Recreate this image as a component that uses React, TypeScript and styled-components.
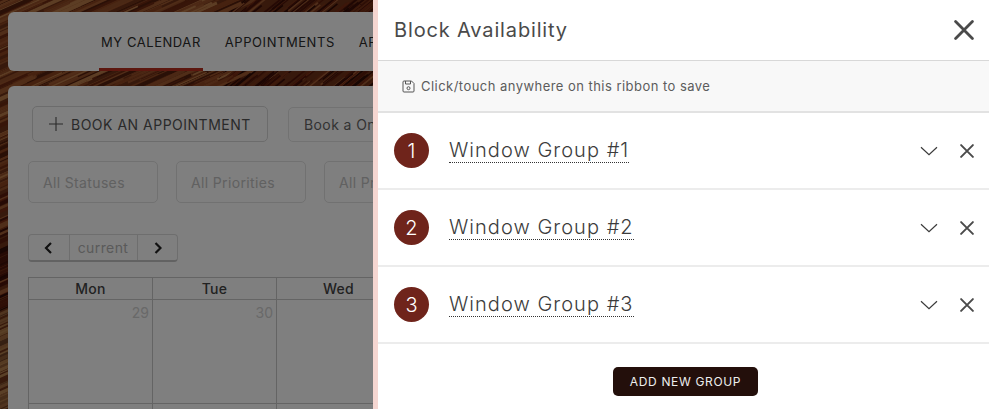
import React from 'react';
import styled, { createGlobalStyle } from 'styled-components';

const FONT = `"Inter", "Liberation Sans", sans-serif`;

const groups = [1, 2, 3];
const filters = ['All Statuses', 'All Priorities', 'All Providers'];
const tabs = ['MY CALENDAR', 'APPOINTMENTS', 'APPROVALS'];
const days = [
  { name: 'Mon', date: '29' },
  { name: 'Tue', date: '30' },
  { name: 'Wed', date: '' },
];

// wood grain, drawn once. colours are before the dark overlay on top of them
const warm = ['#98502a', '#6e2a12', '#a05a30', '#8c4420', '#b87a48', '#54200e', '#94502a'];
const dark = ['#4c140a', '#7a2c14', '#300c06', '#7a3418', '#5c1c0c', '#a05c34', '#3c0e08'];
const light = ['#a87444', '#a87444', '#8c5a34', '#6c4026', '#a0683e', '#b4804e'];

let seed = 7;
const rand = () => {
  seed = (seed * 16807) % 2147483647;
  return seed / 2147483647;
};

const grain = Array.from({ length: 620 }, () => {
  const band = rand();
  const x = rand() * 390;
  // only three slivers of wood are visible, keep the strokes there
  const y = band < 0.32 ? rand() * 16 : band < 0.66 ? 68 + rand() * 22 : rand() * 409;
  const left = band >= 0.66;
  const gx = left ? rand() * 12 : x;
  const palette = left ? (y > 310 ? light : y > 190 ? dark : warm) : gx > 230 ? dark : warm;
  const slope = gx > 230 ? 0.8 : 0.45;
  const len = gx > 230 ? 14 + rand() * 22 : 24 + rand() * 60;
  return {
    x1: gx - len / 2,
    y1: y + (len / 2) * slope,
    x2: gx + len / 2,
    y2: y - (len / 2) * slope,
    w: gx > 230 ? 1 + rand() : 1 + rand() * 3,
    color: palette[Math.floor(rand() * palette.length)],
  };
});

function WoodGrain() {
  return (
    <WoodSvg viewBox='0 0 380 409' aria-hidden>
      <rect width='380' height='409' fill='#6e3218' />
      {grain.map((g, i) => (
        <line key={i} x1={g.x1} y1={g.y1} x2={g.x2} y2={g.y2} stroke={g.color} strokeWidth={g.w} />
      ))}
    </WoodSvg>
  );
}

function CloseIcon({ size, weight }: { size: number; weight: number }) {
  return (
    <svg width={size} height={size} viewBox='0 0 20 20' fill='none'>
      <path d='M1.6 1.6 18.4 18.4M18.4 1.6 1.6 18.4' stroke='#4a4a4a' strokeWidth={weight} strokeLinecap='round' />
    </svg>
  );
}

function ChevronIcon() {
  return (
    <svg width='18' height='10' viewBox='0 0 18 10' fill='none'>
      <path d='M1 1.2 9 8.6 17 1.2' stroke='#3a3a3a' strokeWidth='1.2' />
    </svg>
  );
}

function SaveIcon() {
  return (
    <svg width='13' height='13' viewBox='0 0 13 13' fill='none' stroke='#555' strokeWidth='1'>
      <path d='M2 1h7.5L12 3.5V11a1 1 0 0 1-1 1H2a1 1 0 0 1-1-1V2a1 1 0 0 1 1-1Z' />
      <path d='M3.5 1v3h5V1' />
      <circle cx='6.5' cy='8.2' r='1.5' />
    </svg>
  );
}

export default function App() {
  return (
    <Viewport>
      <GlobalStyle />
      <WoodGrain />
      <Page>
        <NavCard>
          {tabs.map((t, i) => (
            <Tab key={t} $active={i === 0}>{t}</Tab>
          ))}
        </NavCard>
        <MainCard>
          <Actions>
            <BookButton>
              <svg width='14' height='14' viewBox='0 0 14 14' fill='none'>
                <path d='M7 0v14M0 7h14' stroke='#555' strokeWidth='1.1' />
              </svg>
              BOOK AN APPOINTMENT
            </BookButton>
            <OutlineButton>Book a One-Off</OutlineButton>
          </Actions>
          <Filters>
            {filters.map((f) => (
              <FilterBox key={f}>{f}</FilterBox>
            ))}
          </Filters>
          <Pager>
            <PagerButton>
              <svg width='10' height='12' viewBox='0 0 10 12' fill='none'>
                <path d='M7 1 2 6l5 5' stroke='#222' strokeWidth='2.2' />
              </svg>
            </PagerButton>
            <PagerLabel>current</PagerLabel>
            <PagerButton>
              <svg width='10' height='12' viewBox='0 0 10 12' fill='none'>
                <path d='M3.5 1l5 5-5 5' stroke='#222' strokeWidth='2.2' />
              </svg>
            </PagerButton>
          </Pager>
          <Calendar>
            {days.map((d) => (
              <DayHead key={d.name}>{d.name}</DayHead>
            ))}
            {days.map((d) => (
              <DayCell key={d.name}>{d.date}</DayCell>
            ))}
            {days.map((d) => (
              <DayCell key={`next-${d.name}`} />
            ))}
          </Calendar>
        </MainCard>
      </Page>
      <Overlay />
      <Drawer>
        <DrawerHeader>
          <Title>Block Availability</Title>
          <CloseIcon size={20} weight={2.8} />
        </DrawerHeader>
        <Ribbon>
          <SaveIcon />
          <span>Click/touch anywhere on this ribbon to save</span>
        </Ribbon>
        {groups.map((n) => (
          <GroupRow key={n}>
            <Badge>{n}</Badge>
            <GroupName>Window Group #{n}</GroupName>
            <RowIcons>
              <ChevronIcon />
              <CloseIcon size={14} weight={2.8} />
            </RowIcons>
          </GroupRow>
        ))}
        <Footer>
          <AddButton>ADD NEW GROUP</AddButton>
        </Footer>
      </Drawer>
    </Viewport>
  );
}

const GlobalStyle = createGlobalStyle`
  html, body {
    margin: 0;
    padding: 0;
    height: 100%;
    overflow: hidden;
    font-family: ${FONT};
  }
`;

const Viewport = styled.div`
  position: relative;
  width: 989px;
  height: 409px;
  overflow: hidden;
  background: #6e3218;
`;

const WoodSvg = styled.svg`
  position: absolute;
  inset: 0;
  width: 380px;
  height: 409px;
`;

const Page = styled.div`
  position: relative;
  display: flex;
  flex-direction: column;
  gap: 15px;
  width: 373px;
  height: 409px;
  box-sizing: border-box;
  padding: 12px 0 0 8px;
  overflow: hidden;
`;

const NavCard = styled.nav`
  display: flex;
  flex: none;
  gap: 20px;
  width: 1000px;
  height: 59px;
  padding-left: 91px;
  background: #fff;
  border-radius: 6px;
`;

const Tab = styled.div<{ $active?: boolean }>`
  display: flex;
  align-items: center;
  height: 59px;
  box-sizing: border-box;
  padding: 3px 2px 0;
  font-size: 13px;
  letter-spacing: 0.56px;
  color: #2c2c2c;
  white-space: nowrap;
  border-bottom: 3px solid ${(p) => (p.$active ? '#b82e1e' : 'transparent')};
`;

const MainCard = styled.main`
  display: flex;
  flex: none;
  flex-direction: column;
  width: 1000px;
  padding: 20px 0 0 20px;
  background: #fff;
  border-radius: 6px;
`;

const Actions = styled.div`
  display: flex;
  align-items: center;
  gap: 20px;
  margin-left: 4px;
`;

const BookButton = styled.div`
  display: flex;
  align-items: center;
  gap: 8px;
  width: 236px;
  height: 36px;
  box-sizing: border-box;
  padding-left: 16px;
  border: 1px solid #d8d8d8;
  border-radius: 5px;
  font-size: 14px;
  letter-spacing: 0.5px;
  color: #555;
  white-space: nowrap;
`;

const OutlineButton = styled.div`
  display: flex;
  align-items: center;
  width: 200px;
  height: 35px;
  box-sizing: border-box;
  padding-left: 15px;
  border: 1px solid #e4e4e4;
  border-radius: 5px;
  font-size: 14px;
  letter-spacing: 0.4px;
  color: #666;
  white-space: nowrap;
`;

const Filters = styled.div`
  display: flex;
  gap: 18px;
  margin-top: 19px;
`;

const FilterBox = styled.div`
  display: flex;
  align-items: center;
  width: 130px;
  height: 42px;
  box-sizing: border-box;
  padding-left: 14px;
  border: 1px solid #e2e2e2;
  border-radius: 5px;
  font-size: 14px;
  letter-spacing: 0.35px;
  color: #c2c2c2;
  white-space: nowrap;
`;

const Pager = styled.div`
  display: flex;
  align-self: flex-start;
  width: 150px;
  height: 28px;
  margin-top: 31px;
  box-sizing: border-box;
  border: 1px solid #ddd;
  border-bottom: 2px solid #c4c4c4;
  border-radius: 4px;
`;

const PagerButton = styled.div`
  display: flex;
  flex: 1;
  align-items: center;
  justify-content: center;
`;

const PagerLabel = styled.div`
  display: flex;
  align-items: center;
  justify-content: center;
  width: 69px;
  box-sizing: border-box;
  border-left: 1px solid #ddd;
  border-right: 1px solid #ddd;
  font-size: 14px;
  letter-spacing: 0.4px;
  color: #b4b4b4;
`;

const Calendar = styled.div`
  display: grid;
  grid-template-columns: repeat(3, 124px);
  margin-top: 15px;
  border-top: 1px solid #c8c8c8;
  border-left: 1px solid #c8c8c8;
`;

const DayHead = styled.div`
  display: flex;
  align-items: center;
  justify-content: center;
  height: 22px;
  box-sizing: border-box;
  border-right: 1px solid #c8c8c8;
  border-bottom: 1px solid #c8c8c8;
  font-size: 14px;
  font-weight: 500;
  letter-spacing: 0.3px;
  color: #444;
`;

const DayCell = styled.div`
  height: 104px;
  box-sizing: border-box;
  padding: 4px 3px 0 0;
  text-align: right;
  border-right: 1px solid #c8c8c8;
  border-bottom: 1px solid #c8c8c8;
  font-size: 14px;
  color: #d2d2d2;
`;

const Overlay = styled.div`
  position: absolute;
  inset: 0;
  background: rgba(0, 0, 0, 0.5);
`;

const Drawer = styled.aside`
  position: absolute;
  top: 0;
  right: 0;
  bottom: 0;
  width: 611px;
  display: flex;
  flex-direction: column;
  background: #fff;
  border-left: 5px solid #f5d6d1;
`;

const DrawerHeader = styled.header`
  display: flex;
  align-items: center;
  justify-content: space-between;
  height: 60px;
  padding: 0 15px 0 16px;
  border-bottom: 1px solid #d8d8d8;
`;

const Title = styled.h1`
  margin: 0;
  font-size: 20px;
  font-weight: 400;
  letter-spacing: 0.85px;
  color: #4a4a4a;
`;

const Ribbon = styled.div`
  display: flex;
  align-items: center;
  gap: 6px;
  height: 50px;
  padding-left: 24px;
  background: #f8f8f8;
  border-bottom: 2px solid #e2e2e2;
  font-size: 13px;
  letter-spacing: 0.46px;
  color: #5c5c5c;
`;

const GroupRow = styled.div`
  display: flex;
  align-items: center;
  height: 75px;
  padding: 0 15px 0 16px;
  border-bottom: 2px solid #ececec;
`;

const Badge = styled.div`
  display: flex;
  align-items: center;
  justify-content: center;
  width: 35px;
  height: 35px;
  border-radius: 50%;
  background: #6f241b;
  color: #fff;
  font-size: 20px;
  font-weight: 300;
`;

const GroupName = styled.div`
  margin-left: 20px;
  font-size: 20px;
  font-weight: 300;
  letter-spacing: 1.03px;
  color: #3c3c3c;
  border-bottom: 1px dotted #333;
  line-height: 23px;
`;

const RowIcons = styled.div`
  display: flex;
  align-items: center;
  gap: 22px;
  margin-left: auto;
`;

const Footer = styled.div`
  display: flex;
  justify-content: center;
  padding: 23px 0 0 4px;
`;

const AddButton = styled.div`
  display: flex;
  align-items: center;
  justify-content: center;
  width: 145px;
  height: 29px;
  border-radius: 5px;
  background: #230f0b;
  color: #eee;
  font-size: 12px;
  letter-spacing: 0.65px;
`;
